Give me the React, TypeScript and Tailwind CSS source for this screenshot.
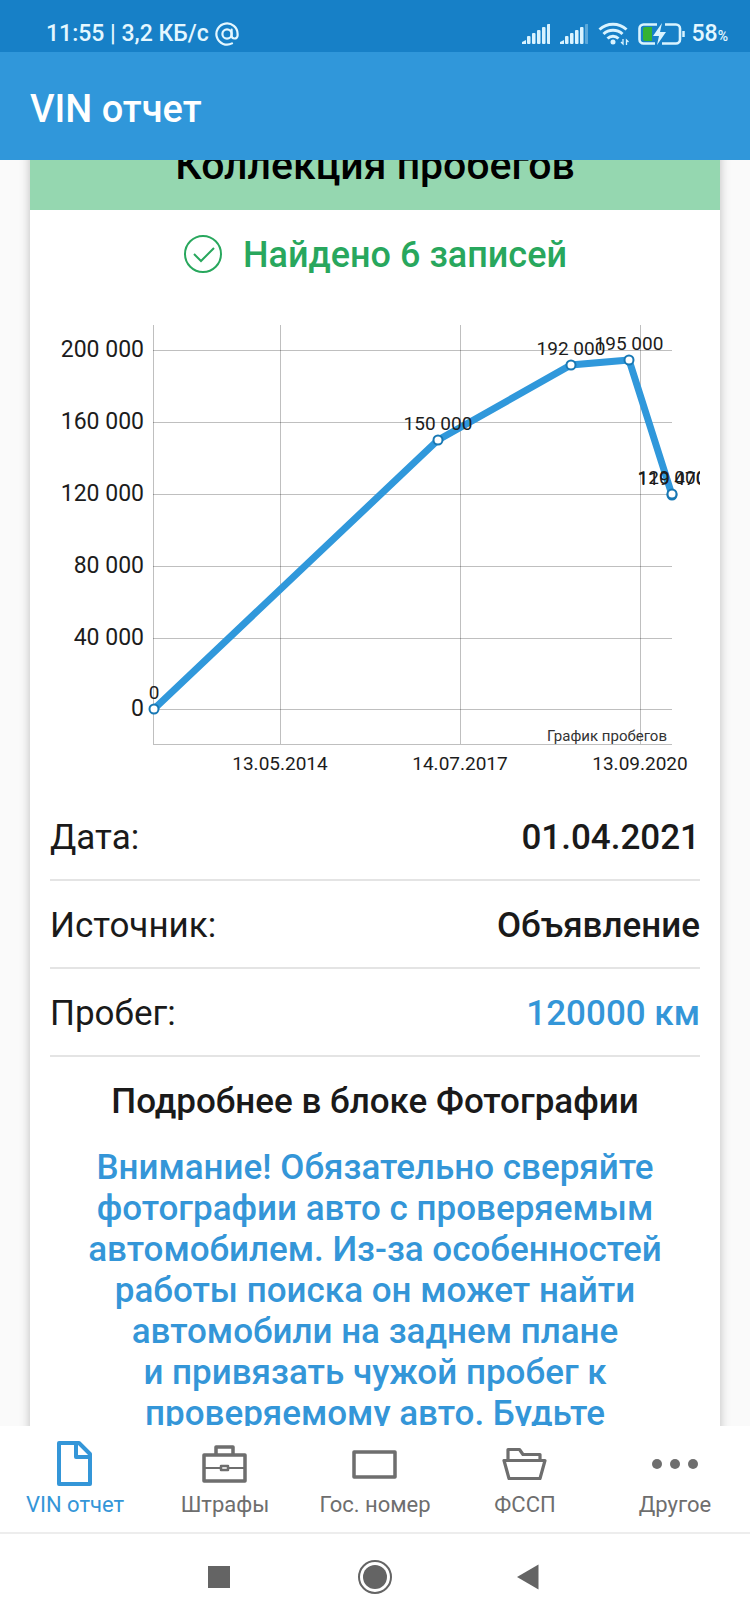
import type { ReactNode } from 'react'

// ============ Data ============

const yTicks = [
  { label: '200 000', y: 40 },
  { label: '160 000', y: 112 },
  { label: '120 000', y: 184 },
  { label: '80 000', y: 256 },
  { label: '40 000', y: 328 },
  { label: '0', y: 399 },
]

const xTicks = [
  { label: '13.05.2014', x: 230 },
  { label: '14.07.2017', x: 410 },
  { label: '13.09.2020', x: 590 },
]

const points = [
  { label: '0', x: 104, y: 399 },
  { label: '150 000', x: 388, y: 130 },
  { label: '192 000', x: 521, y: 55 },
  { label: '195 000', x: 579, y: 50 },
  { label: '119 470', x: 622, y: 185 },
  { label: '120 000', x: 622, y: 184 },
]

const details = [
  { label: 'Дата:', value: '01.04.2021' },
  { label: 'Источник:', value: 'Объявление' },
  { label: 'Пробег:', value: '120000 км', accent: true },
]

// ============ Status Bar ============

function SignalBars({ level }: { level: number }) {
  return (
    <svg className="w-7 h-5" viewBox="0 0 28 20" fill="#d9f3ff">
      <path d="M0 20v-2l4-2v4z" />
      {[0, 1, 2, 3, 4].map((i) => (
        <rect
          key={i}
          x={5 + i * 5}
          y={12 - i * 3}
          width="3.5"
          height={8 + i * 3}
          rx="1"
          opacity={i < level ? 1 : 0.35}
        />
      ))}
    </svg>
  )
}

function StatusBar() {
  return (
    <div className="h-13 shrink-0 flex items-center justify-between pt-4 pl-[46px] pr-[22px] bg-[#1780c7] text-[#e4f7ff] font-medium">
      <div className="flex items-center gap-1.5 text-[23px] leading-7">
        <span>11:55 | 3,2 КБ/с</span>
        <svg className="w-6 h-6" viewBox="0 0 24 24" fill="none" stroke="currentColor" strokeWidth="2.2" strokeLinecap="round">
          <circle cx="12" cy="12" r="4.6" />
          <path d="M16.6 7.5v6a3 3 0 0 0 6 0V12A10.6 10.6 0 1 0 17 21.4" />
        </svg>
      </div>
      <div className="flex items-center">
        <SignalBars level={5} />
        <span className="w-2.5" />
        <SignalBars level={4} />
        <svg className="w-8 h-6 ml-2.5" viewBox="0 0 32 24" fill="none" stroke="#d9f3ff" strokeWidth="3">
          <path d="M1.5 7.5a20 20 0 0 1 27 0" />
          <path d="M5.5 12a14 14 0 0 1 19 0" />
          <path d="M9.5 16.5a8 8 0 0 1 11 0" />
          <circle cx="15" cy="20" r="2.5" fill="#d9f3ff" stroke="none" />
          <path d="M25 17v5l-2-2M28.5 23v-5l2 2" strokeWidth="1.3" />
        </svg>
        <svg className="w-12 h-6 ml-2" viewBox="0 0 48 24" fill="none">
          <path d="M7 5h7v14H7a2 2 0 0 1-2-2V7a2 2 0 0 1 2-2z" fill="#35b233" />
          <path
            d="M19 2.5H5.5a4 4 0 0 0-4 4v11a4 4 0 0 0 4 4H17M27 2.5h11a4 4 0 0 1 4 4v11a4 4 0 0 1-4 4H24"
            stroke="#d9f3ff"
            strokeWidth="2.6"
          />
          <path d="M24 1l-9 13h6l-2 9 9-13h-6z" fill="#d9f3ff" />
          <path d="M45.5 9v6" stroke="#d9f3ff" strokeWidth="2.5" />
        </svg>
        <span className="ml-1.5 text-[23px] leading-7">58</span>
        <span className="text-sm leading-7 pt-1">%</span>
      </div>
    </div>
  )
}

// ============ Mileage Chart ============

function MileageChart() {
  return (
    <svg className="block w-full" viewBox="0 0 650 483">
      <g stroke="#000000" strokeOpacity="0.25" strokeWidth="1" shapeRendering="crispEdges">
        {yTicks.map((t) => (
          <line key={t.label} x1="103" x2="622" y1={t.y} y2={t.y} />
        ))}
        {xTicks.map((t) => (
          <line key={t.label} x1={t.x} x2={t.x} y1="15" y2="434" />
        ))}
        <path d="M103 15V434H622" fill="none" />
      </g>
      <g fill="#1c1c1c" fontSize="23" textAnchor="end">
        {yTicks.map((t) => (
          <text key={t.label} x="94" y={t.y + 7}>
            {t.label}
          </text>
        ))}
      </g>
      <g fill="#1c1c1c" fontSize="19" textAnchor="middle">
        {xTicks.map((t) => (
          <text key={t.label} x={t.x} y="460">
            {t.label}
          </text>
        ))}
      </g>
      <text x="617" y="431" fill="#333333" fontSize="15" textAnchor="end">
        График пробегов
      </text>
      <polyline
        points={points.map((p) => `${p.x},${p.y}`).join(' ')}
        fill="none"
        stroke="#3098db"
        strokeWidth="7"
      />
      {points.map((p) => (
        <g key={p.label}>
          <circle cx={p.x} cy={p.y} r="4.5" fill="#ffffff" stroke="#1878b4" strokeWidth="2" />
          <text x={p.x} y={p.y - 10} fill="#1c1c1c" fontSize="19" textAnchor="middle">
            {p.label}
          </text>
        </g>
      ))}
    </svg>
  )
}

// ============ Report Card ============

function ReportCard() {
  return (
    <section className="-mt-5 mx-[30px] bg-white shadow-[0_0_10px_rgba(0,0,0,0.25)]">
      <h2 className="h-[70px] pt-0.5 bg-[#95d7b0] text-center text-[41px] leading-[46px] font-medium text-black">
        Коллекция пробегов
      </h2>
      <div className="px-5">
        <div className="h-[100px] pb-2.5 flex items-center justify-center gap-5 text-[#28a75d]">
          <svg className="w-10 h-10" viewBox="0 0 40 40" fill="none" stroke="currentColor" strokeWidth="2">
            <circle cx="20" cy="19" r="18" />
            <path d="M11 19l7 7 13-13" />
          </svg>
          <span className="text-[36px] leading-[41px] font-medium">Найдено 6 записей</span>
        </div>
        <MileageChart />
        <dl className="text-[35px] leading-[41px]">
          {details.map((row) => (
            <div key={row.label} className="h-22 pt-0.5 flex items-center justify-between border-b-2 border-[#e4e4e4]">
              <dt>{row.label}</dt>
              <dd className={row.accent ? 'font-medium text-[#3496d8]' : 'font-medium'}>{row.value}</dd>
            </div>
          ))}
        </dl>
        <p className="mt-6 text-center text-[35px] leading-[41px] font-medium">Подробнее в блоке Фотографии</p>
        <p className="mt-[25px] px-5 text-center text-[35px] leading-[41px] font-medium text-[#3496d8]">
          Внимание! Обязательно сверяйте фотографии авто с проверяемым автомобилем. Из-за особенностей работы
          поиска он может найти автомобили на заднем плане и&nbsp;привязать чужой пробег к проверяемому авто.
          Будьте внимательны!
        </p>
      </div>
    </section>
  )
}

// ============ Bottom Navigation ============

function TabButton({ label, active, children }: { label: string; active?: boolean; children: ReactNode }) {
  return (
    <button
      className={`flex-1 flex flex-col items-center pt-3 text-[22px] leading-[26px] ${active ? 'text-[#3496d8]' : 'text-[#6e6e6e]'}`}
    >
      <svg
        className="w-[52px] h-[52px] mb-0.5"
        viewBox="0 0 52 52"
        fill="none"
        stroke="currentColor"
        strokeWidth="4"
        strokeLinejoin="round"
      >
        {children}
      </svg>
      {label}
    </button>
  )
}

function TabBar() {
  return (
    <nav className="h-[106px] shrink-0 flex bg-white">
      <TabButton label="VIN отчет" active>
        <path d="M10 5H30L41 16V46H10z" />
        <path d="M27 5V19H41" />
      </TabButton>
      <TabButton label="Штрафы">
        <path d="M5 17H46V43H5zM17 16V9H34V16" strokeWidth="3.5" />
        <path d="M6 30H21M30 30H46" strokeWidth="2" />
        <rect x="22" y="28" width="7" height="4" strokeWidth="2.5" />
      </TabButton>
      <TabButton label="Гос. номер">
        <path d="M5 14H46V39H5z" strokeWidth="3.5" />
      </TabButton>
      <TabButton label="ФССП">
        <path d="M5 22.5H46L41 40.5H10zM9 22V11.5H20.5L24 16.5H41V22" strokeWidth="3.2" />
      </TabButton>
      <TabButton label="Другое">
        <g fill="currentColor" stroke="none">
          <circle cx="8" cy="26" r="5" />
          <circle cx="26" cy="26" r="5" />
          <circle cx="44" cy="26" r="5" />
        </g>
      </TabButton>
    </nav>
  )
}

function SystemNav() {
  return (
    <div className="h-[91px] pb-1 shrink-0 flex items-center justify-center gap-[120px] border-t-2 border-[#ededed] bg-white text-[#646464]">
      <button aria-label="Недавние">
        <svg className="w-9 h-9" viewBox="0 0 36 36" fill="currentColor">
          <path d="M7 7h22v22H7z" />
        </svg>
      </button>
      <button aria-label="Домой">
        <svg className="w-9 h-9" viewBox="0 0 36 36" fill="currentColor">
          <circle cx="18" cy="18" r="16" fill="none" stroke="currentColor" strokeWidth="2" />
          <circle cx="18" cy="18" r="12" />
        </svg>
      </button>
      <button aria-label="Назад">
        <svg className="w-9 h-9" viewBox="0 0 36 36" fill="currentColor">
          <path d="M4 18L25.5 5.5v25z" />
        </svg>
      </button>
    </div>
  )
}

export default function App() {
  return (
    <div className="h-screen flex flex-col bg-[#fafafa] font-[Roboto,sans-serif] text-[#1a1a1a]">
      <StatusBar />
      <header className="h-[108px] pt-1.5 shrink-0 flex items-center px-[30px] bg-[#3097da]">
        <h1 className="text-[38px] leading-[46px] font-medium text-white">VIN отчет</h1>
      </header>
      <main className="flex-1 min-h-0 overflow-hidden">
        <ReportCard />
      </main>
      <TabBar />
      <SystemNav />
    </div>
  )
}
